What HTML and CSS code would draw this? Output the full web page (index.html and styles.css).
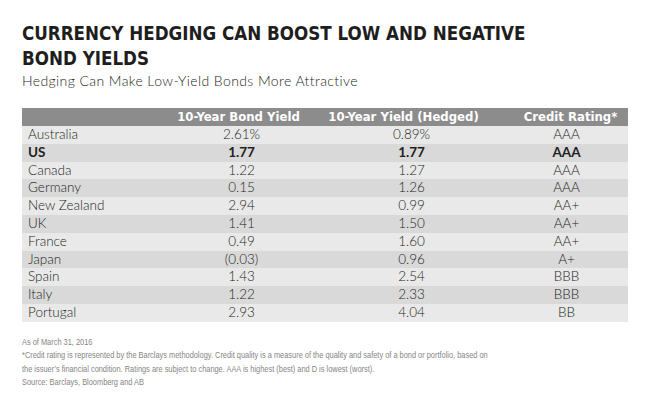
FILE: index.html
```html
<!DOCTYPE html>
<html>
<head>
<meta charset="utf-8">
<link rel="stylesheet" href="styles.css">
</head>
<body>
<div class="page">
  <h1 class="title">CURRENCY HEDGING CAN BOOST LOW AND NEGATIVE<br>BOND YIELDS</h1>
  <p class="subtitle">Hedging Can Make Low-Yield Bonds More Attractive</p>
  <div class="table">
    <div class="row head">
      <div class="c0"></div>
      <div class="c1">10-Year Bond Yield</div>
      <div class="c2">10-Year Yield (Hedged)</div>
      <div class="c3">Credit Rating*</div>
    </div>
    <div class="row odd"><div class="c0">Australia</div><div class="c1">2.61%</div><div class="c2">0.89%</div><div class="c3">AAA</div></div>
    <div class="row even bold"><div class="c0">US</div><div class="c1">1.77</div><div class="c2">1.77</div><div class="c3">AAA</div></div>
    <div class="row odd"><div class="c0">Canada</div><div class="c1">1.22</div><div class="c2">1.27</div><div class="c3">AAA</div></div>
    <div class="row even"><div class="c0">Germany</div><div class="c1">0.15</div><div class="c2">1.26</div><div class="c3">AAA</div></div>
    <div class="row odd"><div class="c0">New Zealand</div><div class="c1">2.94</div><div class="c2">0.99</div><div class="c3">AA+</div></div>
    <div class="row even"><div class="c0">UK</div><div class="c1">1.41</div><div class="c2">1.50</div><div class="c3">AA+</div></div>
    <div class="row odd"><div class="c0">France</div><div class="c1">0.49</div><div class="c2">1.60</div><div class="c3">AA+</div></div>
    <div class="row even"><div class="c0">Japan</div><div class="c1">(0.03)</div><div class="c2">0.96</div><div class="c3">A+</div></div>
    <div class="row odd"><div class="c0">Spain</div><div class="c1">1.43</div><div class="c2">2.54</div><div class="c3">BBB</div></div>
    <div class="row even"><div class="c0">Italy</div><div class="c1">1.22</div><div class="c2">2.33</div><div class="c3">BBB</div></div>
    <div class="row odd"><div class="c0">Portugal</div><div class="c1">2.93</div><div class="c2">4.04</div><div class="c3">BB</div></div>
  </div>
  <div class="notes">
    <p>As of March 31, 2016</p>
    <p>*Credit rating is represented by the Barclays methodology. Credit quality is a measure of the quality and safety of a bond or portfolio, based on<br>the issuer’s financial condition. Ratings are subject to change. AAA is highest (best) and D is lowest (worst).</p>
    <p>Source: Barclays, Bloomberg and AB</p>
  </div>
</div>
</body>
</html>
```
FILE: styles.css
```css
html, body {
  margin: 0;
  padding: 0;
  background: #ffffff;
}
.page {
  width: 606px;
  padding: 21px 0 0 22px;
}
.title {
  margin: 0;
  font-family: "DejaVu Sans Condensed", "DejaVu Sans", sans-serif;
  font-stretch: condensed;
  font-weight: bold;
  font-size: 18.6px;
  line-height: 25px;
  color: #1e1e1e;
}
.subtitle {
  margin: 1px 0 0 0;
  font-family: "Lato", sans-serif;
  font-weight: 300;
  font-size: 14px;
  letter-spacing: 0.4px;
  line-height: 18px;
  color: #231f20;
}
.table {
  margin-top: 18px;
  font-family: "Lato", sans-serif;
  font-weight: 300;
  font-size: 13.5px;
  color: #231f20;
}
.row {
  display: grid;
  grid-template-columns: 143px 153px 187px 123px;
  height: 17.8px;
  align-items: center;
}
.row > div {
  text-align: center;
  line-height: 17.8px;
}
.row > .c0 {
  text-align: left;
  padding-left: 6px;
}
.head {
  height: 18px;
  background: #8c8c8c;
  color: #ffffff;
  font-family: "DejaVu Sans Condensed", "DejaVu Sans", sans-serif;
  font-stretch: condensed;
  font-weight: bold;
  font-size: 13px;
}
.head > div {
  line-height: 18px;
}
.head > .c1 { padding-right: 6px; }
.head > .c2 { padding-right: 16px; }
.head > .c3 { padding-left: 8px; }
.odd { background: #e9e9e9; }
.even { background: #d9d9d9; }
.bold { font-weight: bold; }
.notes {
  margin-top: 13px;
  width: 780px;
  font-family: "Liberation Sans", sans-serif;
  font-size: 9.5px;
  line-height: 13.4px;
  color: #858585;
  white-space: nowrap;
  transform: scaleX(0.78);
  transform-origin: 0 0;
}
.notes p {
  margin: 0;
}
```
